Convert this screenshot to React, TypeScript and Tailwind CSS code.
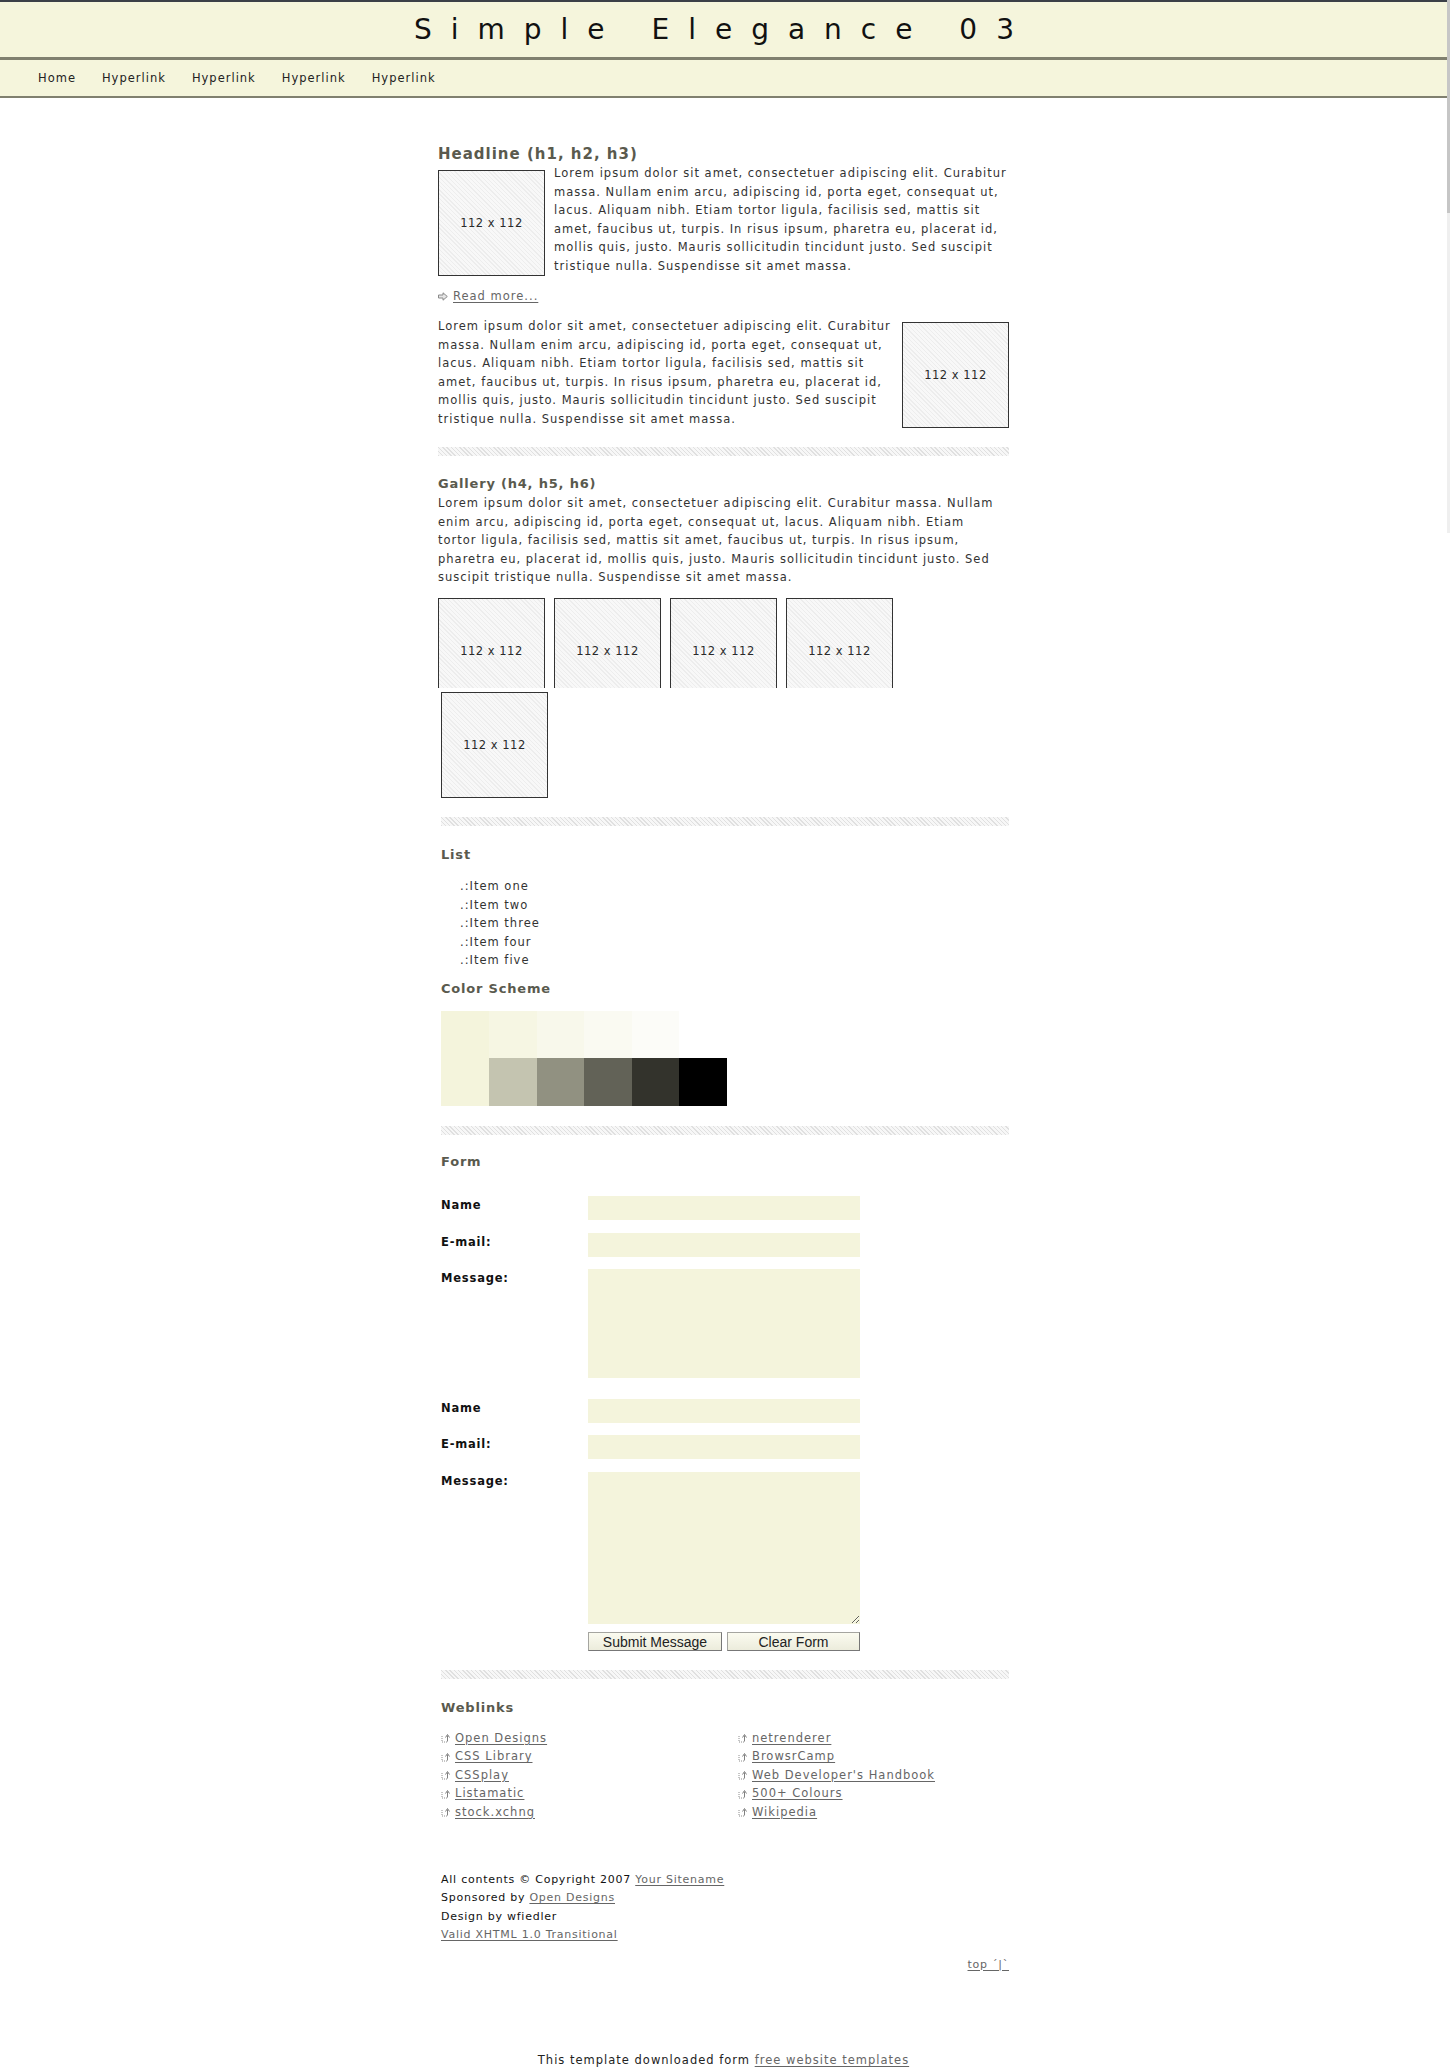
import type { ReactNode } from "react"

const navItems = ["Home", "Hyperlink", "Hyperlink", "Hyperlink", "Hyperlink"]

const para1 = [
  "Lorem ipsum dolor sit amet, consectetuer adipiscing elit. Curabitur",
  "massa. Nullam enim arcu, adipiscing id, porta eget, consequat ut,",
  "lacus. Aliquam nibh. Etiam tortor ligula, facilisis sed, mattis sit",
  "amet, faucibus ut, turpis. In risus ipsum, pharetra eu, placerat id,",
  "mollis quis, justo. Mauris sollicitudin tincidunt justo. Sed suscipit",
  "tristique nulla. Suspendisse sit amet massa.",
]

const galleryText = [
  "Lorem ipsum dolor sit amet, consectetuer adipiscing elit. Curabitur massa. Nullam",
  "enim arcu, adipiscing id, porta eget, consequat ut, lacus. Aliquam nibh. Etiam",
  "tortor ligula, facilisis sed, mattis sit amet, faucibus ut, turpis. In risus ipsum,",
  "pharetra eu, placerat id, mollis quis, justo. Mauris sollicitudin tincidunt justo. Sed",
  "suscipit tristique nulla. Suspendisse sit amet massa.",
]

const listItems = ["Item one", "Item two", "Item three", "Item four", "Item five"]

const linksLeft = ["Open Designs", "CSS Library", "CSSplay", "Listamatic", "stock.xchng"]
const linksRight = ["netrenderer", "BrowsrCamp", "Web Developer's Handbook", "500+ Colours", "Wikipedia"]

const topSwatches = ["bg-[#f6f6e3]", "bg-[#f8f8eb]", "bg-[#fafaf2]", "bg-[#fcfcf8]", "bg-white"]
const bottomSwatches = ["bg-[#c4c4b0]", "bg-[#919181]", "bg-[#626257]", "bg-[#33332c]", "bg-black"]

function Lines({ lines }: { lines: string[] }) {
  return (
    <>
      {lines.map((l) => (
        <span key={l} className="block whitespace-nowrap">
          {l}
        </span>
      ))}
    </>
  )
}

function Placeholder({ className = "" }: { className?: string }) {
  return (
    <div
      className={`flex w-[107px] shrink-0 items-center justify-center border-[#333] bg-[image:repeating-linear-gradient(45deg,#ededed_0px,#ededed_1px,#f8f8f8_1px,#f8f8f8_3px)] tracking-[0.5px] text-[#2a2a2a] ${className}`}
    >
      112 x 112
    </div>
  )
}

function Rule({ className = "" }: { className?: string }) {
  return (
    <div
      className={`h-[9px] bg-[image:repeating-linear-gradient(45deg,#e0e0e0_0px,#e0e0e0_1px,#f7f7f7_1px,#f7f7f7_3px)] ${className}`}
    />
  )
}

function Heading({ children, className = "" }: { children: ReactNode; className?: string }) {
  return (
    <h4 className={`text-[13px] font-bold leading-[16px] tracking-[0.8px] text-[#5a5a4e] ${className}`}>
      {children}
    </h4>
  )
}

function A({ children }: { children: ReactNode }) {
  return (
    <a href="#" className="text-[#666] underline underline-offset-2">
      {children}
    </a>
  )
}

function LinkIcon() {
  return (
    <svg width="10" height="10" viewBox="0 0 10 10" className="shrink-0">
      <path d="M1 3v6h6" fill="none" stroke="#8c8c8c" strokeWidth="1" strokeDasharray="1 1" />
      <path d="M6.5 8.5V2.5" stroke="#808080" strokeWidth="1" />
      <path d="M4.5 4.5L6.5 1.5L8.5 4.5" fill="none" stroke="#808080" strokeWidth="1" />
    </svg>
  )
}

function Field({ label, tall, handle, className = "" }: { label: string; tall?: string; handle?: boolean; className?: string }) {
  return (
    <div className={`flex ${className}`}>
      <label className="w-[147px] shrink-0 font-bold tracking-[0.8px] text-[#111]">{label}</label>
      {tall ? (
        <textarea className={`${tall} w-[272px] bg-[#f4f4dc] outline-none ${handle ? "resize" : "resize-none"}`} />
      ) : (
        <input type="text" className="h-[24px] w-[272px] bg-[#f4f4dc] outline-none" />
      )}
    </div>
  )
}

function Header() {
  return (
    <header className="border-t-2 border-[#3b3f47] bg-[#f5f5dc]">
      <div className="flex h-[58px] items-center justify-center border-b-[3px] border-[#80806f]">
        <h1 className="text-[28px] font-normal leading-none tracking-[19px] text-[#111]">Simple Elegance 03</h1>
      </div>
      <nav className="flex h-[38px] items-center gap-[26px] border-b-2 border-[#80806f] pl-[38px] text-[#222]">
        {navItems.map((n, i) => (
          <a key={i} href="#">
            {n}
          </a>
        ))}
      </nav>
    </header>
  )
}

export default function App() {
  return (
    <div className="flex min-h-[2067px] bg-white font-['DejaVu_Sans',Verdana,sans-serif] text-[11.5px] leading-[18.5px] tracking-[1px] text-[#333]">
      <div className="min-w-0 flex-1">
        <Header />

        <main className="mx-auto w-[571px]">
          {/* Headline */}
          <h2 className="mt-[47px] text-[15px] font-bold leading-[18px] tracking-[1px] text-[#5a5a4e]">Headline (h1, h2, h3)</h2>
          <div className="mt-px flex">
            <Placeholder className="mt-[6px] h-[106px] border" />
            <p className="ml-[9px]">
              <Lines lines={para1} />
            </p>
          </div>

          <div className="mt-[11px] flex items-center gap-[5px]">
            <svg width="10" height="9" viewBox="0 0 10 9" className="shrink-0">
              <path d="M0.5 3h4.5V0.8L9.3 4.5L5 8.2V6H0.5z" fill="#e6e6e6" stroke="#8a8a8a" strokeWidth="1" />
            </svg>
            <A>Read more...</A>
          </div>

          <div className="mt-[11.5px] flex justify-between">
            <p>
              <Lines lines={para1} />
            </p>
            <Placeholder className="mt-[5px] h-[106px] border" />
          </div>

          <Rule className="mt-[19px]" />

          {/* Gallery */}
          <Heading className="mt-[20px]">Gallery (h4, h5, h6)</Heading>
          <p className="mt-[2px]">
            <Lines lines={galleryText} />
          </p>
          <div className="mt-[11.5px] flex gap-[9px]">
            {[0, 1, 2, 3].map((i) => (
              <Placeholder key={i} className="h-[90px] border-x border-t pt-[16px]" />
            ))}
          </div>
          <Placeholder className="ml-[3px] mt-[4px] h-[106px] border" />

          <div className="ml-[3px]">
            <Rule className="mt-[19px]" />

            {/* List */}
            <Heading className="mt-[21px]">List</Heading>
            <ul className="mt-[14px] pl-[19px]">
              {listItems.map((it) => (
                <li key={it}>.:{it}</li>
              ))}
            </ul>

            <Heading className="mt-[11.5px]">Color Scheme</Heading>
            <div className="mt-[14px] flex">
              <div className="h-[95px] w-[48px] bg-[#f4f4dc]" />
              <div className="grid grid-cols-[repeat(5,47.6px)] grid-rows-[47px_48px]">
                {topSwatches.map((c) => (
                  <div key={c} className={c} />
                ))}
                {bottomSwatches.map((c) => (
                  <div key={c} className={c} />
                ))}
              </div>
            </div>

            <Rule className="mt-[20px]" />

            {/* Form */}
            <Heading className="mt-[19px]">Form</Heading>
            <form className="mt-[26px]">
              <Field label="Name" />
              <Field label="E-mail:" className="mt-[13px]" />
              <Field label="Message:" tall="h-[109px]" className="mt-[12px]" />
              <Field label="Name" className="mt-[21px]" />
              <Field label="E-mail:" className="mt-[12px]" />
              <Field label="Message:" tall="h-[152px]" handle className="mt-[13px]" />
              <div className="ml-[147px] mt-[8px] flex gap-[5px] font-['Liberation_Sans',Arial,sans-serif] text-[14px] leading-none tracking-normal text-[#222]">
                <button type="button" className="h-[19px] w-[134px] border border-[#a5a5a0] border-b-[#777] border-r-[#777] bg-[linear-gradient(#fbfbf0,#ececdc)]">
                  Submit Message
                </button>
                <button type="button" className="h-[19px] w-[133px] border border-[#a5a5a0] border-b-[#777] border-r-[#777] bg-[linear-gradient(#fbfbf0,#ececdc)]">
                  Clear Form
                </button>
              </div>
            </form>

            <Rule className="mt-[19px]" />

            {/* Weblinks */}
            <Heading className="mt-[21px]">Weblinks</Heading>
            <div className="mt-[12.75px] grid grid-cols-[297px_1fr]">
              {[linksLeft, linksRight].map((col, ci) => (
                <ul key={ci}>
                  {col.map((l) => (
                    <li key={l} className="flex items-center gap-[4px]">
                      <LinkIcon />
                      <A>{l}</A>
                    </li>
                  ))}
                </ul>
              ))}
            </div>

            {/* Footer */}
            <footer className="mt-[49.5px] text-[11px] tracking-[0.75px] text-[#111]">
              <p>
                All contents © Copyright 2007 <A>Your Sitename</A>
              </p>
              <p>
                Sponsored by <A>Open Designs</A>
              </p>
              <p>Design by wfiedler</p>
              <p>
                <A>Valid XHTML 1.0 Transitional</A>
              </p>
              <p className="mt-[11px] text-right">
                <A>top ´|`</A>
              </p>
            </footer>
          </div>
        </main>

        <p className="mt-[77px] text-center text-[#222]">
          This template downloaded form <A>free website templates</A>
        </p>
      </div>

      {/* scrollbar strip */}
      <div className="w-[3px] shrink-0">
        <div className="h-[213px] bg-[#c6c6c6]" />
        <div className="h-[320px] bg-[#efefef]" />
      </div>
    </div>
  )
}
